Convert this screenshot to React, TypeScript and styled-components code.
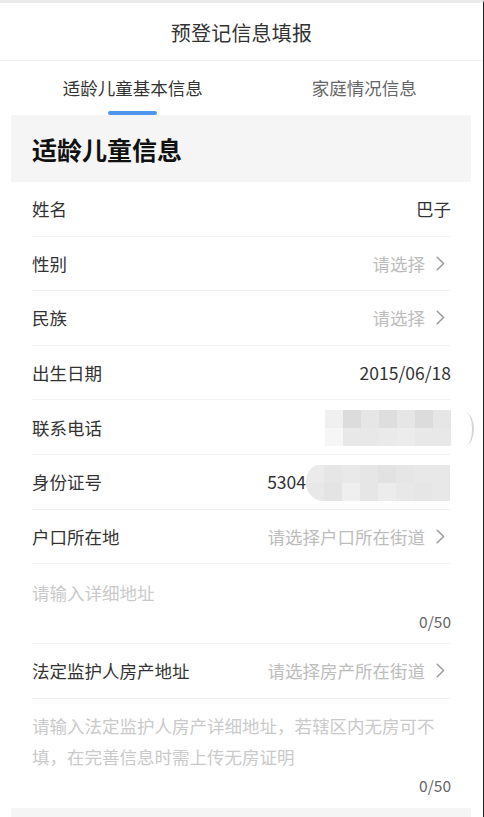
import React from "react";
import styled, { createGlobalStyle } from "styled-components";

const GlobalStyle = createGlobalStyle`
  html, body { margin: 0; padding: 0; background: #ffffff; }
  body {
    font-family: "Noto Sans CJK SC", "Noto Sans", "Liberation Sans", sans-serif;
    -webkit-font-smoothing: antialiased;
  }
  * { box-sizing: border-box; }
`;

const Page = styled.div`
  width: 484px;
  min-height: 817px;
  background: #ffffff;
  border-top: 3px solid #ececec;
  border-right: 1px solid #1e1e1e;
  overflow: hidden;
`;

const Header = styled.header`
  height: 58px;
  display: flex;
  align-items: center;
  justify-content: center;
  padding-top: 1px;
  border-bottom: 1px solid #f0f0f0;
  font-size: 20px;
  color: #333333;
  letter-spacing: 0.2px;
`;

const Tabs = styled.nav`
  display: grid;
  grid-template-columns: 1fr 1fr;
  padding: 0 3px 0 17px;
  height: 54px;
`;

const Tab = styled.div<{ $active?: boolean }>`
  display: flex;
  flex-direction: column;
  align-items: center;
  padding-top: 15px;
  font-size: 17.5px;
  line-height: 24px;
  color: ${(p) => (p.$active ? "#333333" : "#666666")};
`;

const Indicator = styled.span`
  display: block;
  width: 49px;
  height: 4px;
  margin-top: 11px;
  border-radius: 2px;
  background: #4f95ef;
`;

const SectionCard = styled.div`
  margin: 0 12px 0 11px;
  height: 67px;
  background: #f5f5f5;
  display: flex;
  align-items: center;
  padding-left: 21px;
  font-size: 25px;
  font-weight: 700;
  color: #111111;
`;

const Form = styled.div`
  padding: 0 32px 0 32px;
`;

const Row = styled.div`
  height: 54.6px;
  display: flex;
  align-items: center;
  justify-content: space-between;
  border-bottom: 1px solid #f2f2f2;
  font-size: 17.5px;
`;

const Label = styled.span`
  color: #333333;
  white-space: nowrap;
`;

const Value = styled.span<{ $placeholder?: boolean }>`
  display: flex;
  align-items: center;
  color: ${(p) => (p.$placeholder ? "#bdbdbd" : "#333333")};
  white-space: nowrap;
`;

const ChevronIcon = styled.svg`
  width: 9px;
  height: 15px;
  margin-left: 11px;
  margin-right: 6px;
  flex: none;
`;

const Chevron = () => (
  <ChevronIcon viewBox="0 0 9 15" fill="none">
    <path d="M1.2 1.2 L7.6 7.5 L1.2 13.8" stroke="#9a9a9a" strokeWidth="1.5" strokeLinecap="round" strokeLinejoin="round" />
  </ChevronIcon>
);

const BlurGrid = styled.span<{ $cols: number; $roundLeft?: boolean; $arc?: boolean }>`
  position: relative;
  display: grid;
  grid-template-columns: repeat(${(p) => p.$cols}, 18px);
  grid-template-rows: 18px 17.5px;
  border-radius: ${(p) => (p.$roundLeft ? "18px 0 0 18px" : "0")};
  overflow: visible;
  margin-top: 2px;

  &::after {
    content: "";
    display: ${(p) => (p.$arc ? "block" : "none")};
    position: absolute;
    right: -23px;
    top: 3px;
    width: 14px;
    height: 32px;
    border-radius: 50%;
    border-right: 2px solid #d6d6d6;
  }
`;

const Cell = styled.span<{ $c: string; $first?: boolean }>`
  background: ${(p) => p.$c};
`;

const ClipWrap = styled.span<{ $roundLeft?: boolean }>`
  display: flex;
  overflow: ${(p) => (p.$roundLeft ? "hidden" : "visible")};
  border-radius: ${(p) => (p.$roundLeft ? "18px 0 0 18px" : "0")};
  margin-right: 1px;
`;

const phoneCells = [
  "#f0f0f0", "#dcdcdc", "#e6e6e6", "#dedede", "#e6e6e6", "#dcdcdc", "#e6e6e6",
  "#f6f6f6", "#e8e8e8", "#e8e8e8", "#eaeaea", "#ececec", "#e8e8e8", "#e8e8e8",
];

const idCells = [
  "#ebebeb", "#e6e6e6", "#e9e9e9", "#e6e6e6", "#e2e2e2", "#e6e6e6", "#e8e8e8", "#e8e8e8",
  "#e8e8e8", "#e4e4e4", "#efefef", "#e6e6e6", "#ececec", "#e8e8e8", "#e6e6e6", "#e8e8e8",
];

const IdText = styled.span`
  color: #333333;
  margin-right: 0;
`;

const TextBlock = styled.div<{ $top: number; $bottom: number; $divider?: boolean }>`
  display: flex;
  flex-direction: column;
  padding: ${(p) => p.$top}px 0 ${(p) => p.$bottom}px;
  border-bottom: ${(p) => (p.$divider ? "1px solid #f2f2f2" : "none")};
`;

const Area = styled.textarea<{ $lines: number }>`
  display: block;
  width: 410px;
  height: ${(p) => p.$lines * 31}px;
  padding: 0;
  margin: 0;
  border: none;
  outline: none;
  resize: none;
  background: transparent;
  font-family: inherit;
  font-size: 17.5px;
  line-height: 31px;
  color: #333333;
  overflow: hidden;

  &::placeholder {
    color: #cacaca;
  }
`;

const Counter = styled.div`
  margin-top: 3px;
  align-self: flex-end;
  font-size: 15.5px;
  line-height: 20px;
  color: #666666;
`;

const NextCard = styled.div`
  margin: 0 12px 0 11px;
  height: 40px;
  background: #f5f5f5;
`;

export default function App() {
  return (
    <>
      <GlobalStyle />
      <Page>
        <Header>预登记信息填报</Header>
        <Tabs>
          <Tab $active>
            适龄儿童基本信息
            <Indicator />
          </Tab>
          <Tab>家庭情况信息</Tab>
        </Tabs>
        <SectionCard>适龄儿童信息</SectionCard>
        <Form>
          <Row>
            <Label>姓名</Label>
            <Value>巴子</Value>
          </Row>
          <Row>
            <Label>性别</Label>
            <Value $placeholder>
              请选择
              <Chevron />
            </Value>
          </Row>
          <Row>
            <Label>民族</Label>
            <Value $placeholder>
              请选择
              <Chevron />
            </Value>
          </Row>
          <Row>
            <Label>出生日期</Label>
            <Value>2015/06/18</Value>
          </Row>
          <Row>
            <Label>联系电话</Label>
            <Value>
              <BlurGrid $cols={7} $arc>
                {phoneCells.map((c, i) => (
                  <Cell key={i} $c={c} />
                ))}
              </BlurGrid>
            </Value>
          </Row>
          <Row>
            <Label>身份证号</Label>
            <Value>
              <IdText>5304</IdText>
              <ClipWrap $roundLeft>
                <BlurGrid $cols={8}>
                  {idCells.map((c, i) => (
                    <Cell key={i} $c={c} />
                  ))}
                </BlurGrid>
              </ClipWrap>
            </Value>
          </Row>
          <Row>
            <Label>户口所在地</Label>
            <Value $placeholder>
              请选择户口所在街道
              <Chevron />
            </Value>
          </Row>
          <TextBlock $top={13} $bottom={12} $divider>
            <Area $lines={1} placeholder="请输入详细地址" />
            <Counter>0/50</Counter>
          </TextBlock>
          <Row>
            <Label>法定监护人房产地址</Label>
            <Value $placeholder>
              请选择房产所在街道
              <Chevron />
            </Value>
          </Row>
          <TextBlock $top={11} $bottom={13}>
            <Area
              $lines={2}
              placeholder="请输入法定监护人房产详细地址，若辖区内无房可不填，在完善信息时需上传无房证明"
            />
            <Counter>0/50</Counter>
          </TextBlock>
        </Form>
        <NextCard />
      </Page>
    </>
  );
}
